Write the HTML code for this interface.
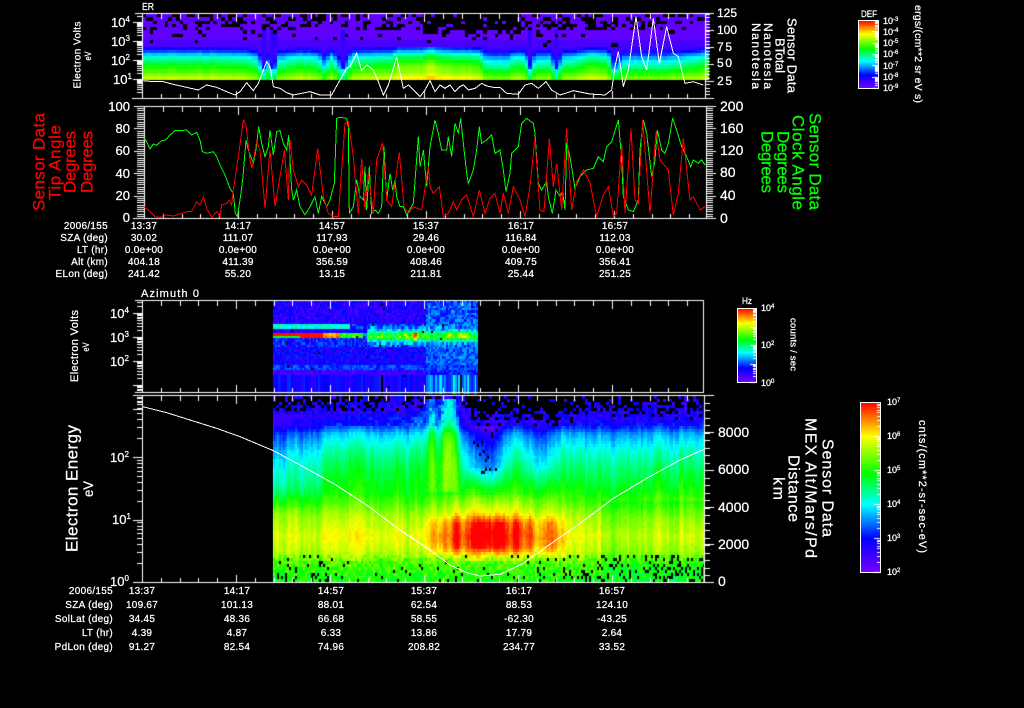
<!DOCTYPE html>
<html><head><meta charset="utf-8"><title>Sensor Data</title>
<style>
html,body{margin:0;padding:0;background:#000;width:1024px;height:708px;overflow:hidden}
#wrap{position:relative;width:1024px;height:708px;background:#000}
#wrap>*{position:absolute;left:0;top:0}
text{font-family:"Liberation Sans",sans-serif;fill:#fff;stroke:#fff;stroke-width:.25px}
.t{font-size:10px;letter-spacing:.25px;text-anchor:middle}
.l{font-size:10px;letter-spacing:.3px;text-anchor:end}
.n{font-size:13px;text-anchor:end}
.m{font-size:13px}
.c{font-size:9px}
.r{text-anchor:middle;dominant-baseline:central}
text.red{fill:#f00;stroke:#f00}
text.grn{fill:#0f0;stroke:#0f0}
</style></head><body>
<div id="wrap">
<div style="left:142px;top:14px;width:563px;height:65px;background:linear-gradient(#400080,#7800ff 45%,#00f 52%,#0ff 68%,#0f0 85%,#ff0)"></div>
<div style="left:273px;top:301px;width:204px;height:91px;background:#1010e0"></div>
<div style="left:273px;top:396px;width:431px;height:186px;background:linear-gradient(#000,#00f 12%,#0ff 24%,#0f0 45%,#ff0 75%,#0f0)"></div>
<canvas id="cv" width="1024" height="708"></canvas>
<svg width="1024" height="708" viewBox="0 0 1024 708" xmlns="http://www.w3.org/2000/svg">
<defs><linearGradient id="rb" x1="0" y1="1" x2="0" y2="0">
<stop offset="0" stop-color="#7800ff"/><stop offset=".2" stop-color="#00f"/><stop offset=".4" stop-color="#0ff"/><stop offset=".58" stop-color="#0f0"/><stop offset=".8" stop-color="#ff0"/><stop offset=".9" stop-color="#ff8000"/><stop offset="1" stop-color="#f00"/></linearGradient></defs>

<!-- data lines -->
<g fill="none" shape-rendering="crispEdges">
<g transform="scale(.33333)" stroke="#fff" stroke-width="3">
<polyline points="430,242 460,245 490,245 520,253 560,262 595,270 620,255 650,262 680,275 705,285 720,275 740,248 760,272 775,250 800,185 810,200 820,260 840,265 860,278 880,285 930,275 960,285 995,285 1020,240 1040,205 1050,200 1070,160 1085,212 1100,195 1120,210 1135,245 1150,285 1165,255 1190,172 1210,265 1225,255 1240,270 1260,290"/></g>
<g transform="translate(420,0) scale(.33333)" stroke="#fff" stroke-width="3">
<polyline points="0,290 15,270 30,242 45,275 60,255 75,265 90,255 105,275 120,260 130,255 145,270 165,265 185,250 200,258 220,262 240,262 260,280 295,283 315,255 335,250 355,265 378,245 395,270 420,285 460,272 510,282 555,285 575,270 585,200 595,155 610,260 625,210 648,50 665,170 680,210 700,55 718,190 740,80 760,160 775,170 795,250 820,245 850,255"/></g>
<g transform="scale(.33333)" stroke="#00ff00" stroke-width="3">
<polyline points="432,415 440,425 450,447 460,432 470,436 485,422 497,420 510,405 525,392 540,392 560,390 575,405 590,397 600,420 607,455 620,460 640,455 650,470 660,495 675,525 690,565 700,580 706,640 712,650 720,600 728,540 738,420 745,450 760,490 768,450 776,380 785,430 795,470 805,440 810,390 820,465 830,395 840,392 850,430 860,450 866,405 875,570 880,600 890,570 900,620 915,645 930,620 945,590 955,640 965,590 980,620 990,600 1003,550 1010,355 1020,352 1040,355 1045,380 1048,640 1060,620 1070,540 1080,590 1090,600 1095,500 1100,630 1108,500 1115,640 1125,630 1135,640 1145,620 1152,440 1160,600 1170,520 1178,570 1185,540 1190,590 1200,620 1210,620 1220,645 1240,610 1255,410 1260,500"/></g>
<g transform="translate(420,0) scale(.33333)" stroke="#00ff00" stroke-width="3">
<polyline points="0,500 10,450 20,560 30,440 45,360 55,400 65,450 80,450 85,410 95,470 105,370 115,400 122,355 130,430 140,520 145,550 160,510 170,450 178,380 185,430 200,420 215,405 225,460 240,450 250,510 258,575 270,520 275,460 295,440 305,370 320,355 340,370 345,400 355,550 365,570 380,545 385,590 397,640 408,570 420,590 428,575 435,630 440,430 450,470 465,565 480,530 500,510 520,505 535,470 550,485 560,440 575,425 595,360 605,480 610,590 625,630 640,635 655,600 660,450 670,360 680,400 695,530 705,480 712,390 725,450 735,460 745,430 758,355 770,390 785,440 800,470 812,500 820,480 835,490 845,480 855,495"/></g>
<g transform="scale(.33333)" stroke="#ff0000" stroke-width="3">
<polyline points="432,620 445,630 465,650 480,652 500,645 520,648 545,640 560,635 575,635 590,605 600,615 610,590 620,625 635,652 650,635 660,650 665,615 680,610 688,600 695,615 700,570 715,470 730,360 738,375 750,480 756,505 770,425 780,450 795,625 810,450 825,620 845,500 853,450 865,600 870,420 880,510 895,560 905,540 920,555 935,585 953,445 970,590 985,640 1000,650 1015,650 1035,370 1045,365 1060,470 1075,640 1085,475 1095,630 1105,520 1120,640 1130,480 1148,428 1160,600 1175,620 1198,458 1212,620 1225,640 1240,620 1265,630"/></g>
<g transform="translate(420,0) scale(.33333)" stroke="#ff0000" stroke-width="3">
<polyline points="5,630 25,500 30,560 40,580 58,560 70,650 85,640 100,605 110,630 125,600 140,585 160,650 178,570 195,640 210,595 225,580 240,640 250,580 265,640 280,560 300,600 315,650 330,560 345,415 360,630 372,635 388,415 400,560 410,490 425,630 440,385 455,630 470,545 490,510 510,550 530,650 550,585 565,560 580,650 590,640 605,430 615,640 633,385 645,600 655,610 668,360 690,640 708,395 720,480 745,510 760,645 775,580 790,415 810,600 820,590 840,630 855,620"/></g>
<g transform="translate(0,390) scale(.33333)" stroke="#fff" stroke-width="3">
<polyline points="428,50 500,68 570,90 650,115 720,140 820,182 900,225 1000,280 1100,345 1200,420 1290,480 1350,525 1400,548 1440,558"/></g>
<g transform="translate(480,390) scale(.33333)" stroke="#fff" stroke-width="3">
<polyline points="0,558 60,553 130,520 200,470 300,400 400,325 500,265 600,210 672,178"/></g>
</g>

<!-- colour bars -->
<rect x="858.5" y="20.5" width="20" height="68" fill="url(#rb)" stroke="#fff"/>
<rect x="737.5" y="308.5" width="19" height="74" fill="url(#rb)" stroke="#fff"/>
<rect x="860.5" y="402.5" width="20" height="170" fill="url(#rb)" stroke="#fff"/>

<!-- panel titles -->
<text x="142" y="10" font-size="10" textLength="12" lengthAdjust="spacingAndGlyphs">ER</text>
<text x="141" y="297" font-size="11" textLength="58">Azimuth 0</text>

<!-- panel 1 axes -->
<text class="m" x="111" y="27">10<tspan dy="-5" font-size="8">4</tspan></text>
<text class="m" x="111" y="46">10<tspan dy="-5" font-size="8">3</tspan></text>
<text class="m" x="111" y="65">10<tspan dy="-5" font-size="8">2</tspan></text>
<text class="m" x="113" y="84">10<tspan dy="-5" font-size="8">1</tspan></text>
<text class="r" transform="translate(78,55) rotate(-90)" font-size="10" textLength="67">Electron Volts</text>
<text class="r" transform="translate(88,56) rotate(-90)" font-size="9" textLength="9" lengthAdjust="spacingAndGlyphs">eV</text>
<text class="m" x="717" y="17" style="font-size:12px" textLength="20">125</text>
<text class="m" x="717" y="34" style="font-size:12px" textLength="20">100</text>
<text class="m" x="717" y="51" style="font-size:12px" textLength="15">75</text>
<text class="m" x="717" y="67" style="font-size:12px" textLength="15">50</text>
<text class="m" x="717" y="85" style="font-size:12px" textLength="15">25</text>
<text class="r" transform="translate(792,55.5) rotate(90)" font-size="13" textLength="75">Sensor Data</text>
<text class="r" transform="translate(780,55.5) rotate(90)" font-size="13" textLength="35">BTotal</text>
<text class="r" transform="translate(768,56) rotate(90)" font-size="12" textLength="66">Nanotesla</text>
<text class="r" transform="translate(756,56) rotate(90)" font-size="12" textLength="66">Nanotesla</text>

<!-- panel 2 axes -->
<text class="n" x="130" y="111">100</text><text class="n" x="130" y="133">80</text><text class="n" x="130" y="155">60</text><text class="n" x="130" y="178">40</text><text class="n" x="130" y="200">20</text><text class="n" x="130" y="222">0</text>
<text class="m" x="720" y="111" style="font-size:14px">200</text><text class="m" x="720" y="133" style="font-size:14px">160</text><text class="m" x="720" y="155" style="font-size:14px">120</text><text class="m" x="720" y="177" style="font-size:14px">80</text><text class="m" x="720" y="200" style="font-size:14px">40</text><text class="m" x="720" y="223" style="font-size:14px">0</text>
<text class="r red" transform="translate(39,162) rotate(-90)" font-size="17" textLength="98">Sensor Data</text>
<text class="r red" transform="translate(55,162.5) rotate(-90)" font-size="17" textLength="75">Tip Angle</text>
<text class="r red" transform="translate(70,162) rotate(-90)" font-size="17" textLength="62">Degrees</text>
<text class="r red" transform="translate(87,162) rotate(-90)" font-size="17" textLength="62">Degrees</text>
<text class="r grn" transform="translate(815,161.5) rotate(90)" font-size="17" textLength="97">Sensor Data</text>
<text class="r grn" transform="translate(798,162.5) rotate(90)" font-size="17" textLength="95">Clock Angle</text>
<text class="r grn" transform="translate(783,162) rotate(90)" font-size="17" textLength="62">Degrees</text>
<text class="r grn" transform="translate(767,162) rotate(90)" font-size="17" textLength="62">Degrees</text>

<!-- table 1 -->
<text class="l" x="108" y="229">2006/155</text><text class="l" x="108" y="241">SZA (deg)</text><text class="l" x="108" y="253">LT (hr)</text><text class="l" x="108" y="265">Alt (km)</text><text class="l" x="108" y="277">ELon (deg)</text>
<text class="t" x="144" y="229">13:37</text><text class="t" x="238" y="229">14:17</text><text class="t" x="332" y="229">14:57</text><text class="t" x="426" y="229">15:37</text><text class="t" x="521" y="229">16:17</text><text class="t" x="615" y="229">16:57</text>
<text class="t" x="144" y="241">30.02</text><text class="t" x="238" y="241">111.07</text><text class="t" x="332" y="241">117.93</text><text class="t" x="426" y="241">29.46</text><text class="t" x="521" y="241">116.84</text><text class="t" x="615" y="241">112.03</text>
<text class="t" x="144" y="253">0.0e+00</text><text class="t" x="238" y="253">0.0e+00</text><text class="t" x="332" y="253">0.0e+00</text><text class="t" x="426" y="253">0.0e+00</text><text class="t" x="521" y="253">0.0e+00</text><text class="t" x="615" y="253">0.0e+00</text>
<text class="t" x="144" y="265">404.18</text><text class="t" x="238" y="265">411.39</text><text class="t" x="332" y="265">356.59</text><text class="t" x="426" y="265">408.46</text><text class="t" x="521" y="265">409.75</text><text class="t" x="615" y="265">356.41</text>
<text class="t" x="144" y="277">241.42</text><text class="t" x="238" y="277">55.20</text><text class="t" x="332" y="277">13.15</text><text class="t" x="426" y="277">211.81</text><text class="t" x="521" y="277">25.44</text><text class="t" x="615" y="277">251.25</text>

<!-- panel 3 axes -->
<text class="m" x="110" y="318">10<tspan dy="-5" font-size="8">4</tspan></text>
<text class="m" x="110" y="342">10<tspan dy="-5" font-size="8">3</tspan></text>
<text class="m" x="110" y="366">10<tspan dy="-5" font-size="8">2</tspan></text>
<text class="r" transform="translate(75,346) rotate(-90)" font-size="11" textLength="72">Electron Volts</text>
<text class="r" transform="translate(86,347) rotate(-90)" font-size="9" textLength="9" lengthAdjust="spacingAndGlyphs">eV</text>

<!-- panel 4 axes -->
<text class="m" x="110" y="462">10<tspan dy="-5" font-size="8">2</tspan></text>
<text class="m" x="112" y="524">10<tspan dy="-5" font-size="8">1</tspan></text>
<text class="m" x="110" y="586">10<tspan dy="-5" font-size="8">0</tspan></text>
<text class="r" transform="translate(72,488.5) rotate(-90)" font-size="17" textLength="127">Electron Energy</text>
<text class="r" transform="translate(88,489) rotate(-90)" font-size="14" textLength="16" lengthAdjust="spacingAndGlyphs">eV</text>
<text class="m" x="718" y="437" style="font-size:14px">8000</text><text class="m" x="718" y="474" style="font-size:14px">6000</text><text class="m" x="718" y="512" style="font-size:14px">4000</text><text class="m" x="718" y="549" style="font-size:14px">2000</text><text class="m" x="718" y="586" style="font-size:14px">0</text>
<text class="r" transform="translate(827,488) rotate(90)" font-size="16" textLength="98">Sensor Data</text>
<text class="r" transform="translate(810,488) rotate(90)" font-size="16" textLength="140">MEX Alt/Mars/Pd</text>
<text class="r" transform="translate(793,488.5) rotate(90)" font-size="16" textLength="67">Distance</text>
<text class="r" transform="translate(778,488.5) rotate(90)" font-size="16" textLength="23">km</text>

<!-- table 2 -->
<text class="l" x="113" y="594">2006/155</text><text class="l" x="113" y="608">SZA (deg)</text><text class="l" x="113" y="622">SolLat (deg)</text><text class="l" x="113" y="636">LT (hr)</text><text class="l" x="113" y="650">PdLon (deg)</text>
<text class="t" x="142" y="594">13:37</text><text class="t" x="237" y="594">14:17</text><text class="t" x="331" y="594">14:57</text><text class="t" x="424" y="594">15:37</text><text class="t" x="519" y="594">16:17</text><text class="t" x="612" y="594">16:57</text>
<text class="t" x="142" y="608">109.67</text><text class="t" x="237" y="608">101.13</text><text class="t" x="331" y="608">88.01</text><text class="t" x="424" y="608">62.54</text><text class="t" x="519" y="608">88.53</text><text class="t" x="612" y="608">124.10</text>
<text class="t" x="142" y="622">34.45</text><text class="t" x="237" y="622">48.36</text><text class="t" x="331" y="622">66.68</text><text class="t" x="424" y="622">58.55</text><text class="t" x="519" y="622">-62.30</text><text class="t" x="612" y="622">-43.25</text>
<text class="t" x="142" y="636">4.39</text><text class="t" x="237" y="636">4.87</text><text class="t" x="331" y="636">6.33</text><text class="t" x="424" y="636">13.86</text><text class="t" x="519" y="636">17.79</text><text class="t" x="612" y="636">2.64</text>
<text class="t" x="142" y="650">91.27</text><text class="t" x="237" y="650">82.54</text><text class="t" x="331" y="650">74.96</text><text class="t" x="424" y="650">208.82</text><text class="t" x="519" y="650">234.77</text><text class="t" x="612" y="650">33.52</text>

<!-- colour bar labels -->
<text class="c" x="861" y="17" textLength="16" lengthAdjust="spacingAndGlyphs">DEF</text>
<text class="c" x="883" y="24">10<tspan dy="-3" font-size="6">-3</tspan></text><text class="c" x="883" y="35">10<tspan dy="-3" font-size="6">-4</tspan></text><text class="c" x="883" y="46">10<tspan dy="-3" font-size="6">-5</tspan></text><text class="c" x="883" y="57">10<tspan dy="-3" font-size="6">-6</tspan></text><text class="c" x="883" y="69">10<tspan dy="-3" font-size="6">-7</tspan></text><text class="c" x="883" y="80">10<tspan dy="-3" font-size="6">-8</tspan></text><text class="c" x="883" y="91">10<tspan dy="-3" font-size="6">-9</tspan></text>
<text class="r" transform="translate(918,54) rotate(90)" font-size="10.5" textLength="98">ergs/(cm**2 sr eV s)</text>

<text class="c" x="742" y="304" textLength="10" lengthAdjust="spacingAndGlyphs">Hz</text>
<text class="c" x="761" y="311">10<tspan dy="-3" font-size="6">4</tspan></text><text class="c" x="761" y="348">10<tspan dy="-3" font-size="6">2</tspan></text><text class="c" x="761" y="386">10<tspan dy="-3" font-size="6">0</tspan></text>
<text class="r" transform="translate(793,344.5) rotate(90)" font-size="9.5" textLength="53">counts / sec</text>

<text class="c" x="887" y="405">10<tspan dy="-3" font-size="6">7</tspan></text><text class="c" x="887" y="439">10<tspan dy="-3" font-size="6">6</tspan></text><text class="c" x="887" y="473">10<tspan dy="-3" font-size="6">5</tspan></text><text class="c" x="887" y="507">10<tspan dy="-3" font-size="6">4</tspan></text><text class="c" x="887" y="541">10<tspan dy="-3" font-size="6">3</tspan></text><text class="c" x="887" y="575">10<tspan dy="-3" font-size="6">2</tspan></text>
<text class="r" transform="translate(922,486.5) rotate(90)" font-size="11" textLength="133">cnts/(cm**2-sr-sec-eV)</text>
</svg>
</div>
<script>
(function(){
var ctx=document.getElementById('cv').getContext('2d');
var seed=12345;
function R(){seed=(seed*1664525+1013904223)%4294967296;return seed/4294967296;}
function I(k,x){if(x<=k[0][0])return k[0][1];for(var i=1;i<k.length;i++){if(x<=k[i][0]){var a=k[i-1],b=k[i];return a[1]+(b[1]-a[1])*(x-a[0])/(b[0]-a[0]);}}return k[k.length-1][1];}
var CM=[[0,[120,0,255]],[.2,[0,0,255]],[.4,[0,255,255]],[.58,[0,255,0]],[.8,[255,255,0]],[.9,[255,128,0]],[1,[255,0,0]]];
function col(c){c=Math.max(0,Math.min(1,c));var r=[0,1,2].map(function(j){return Math.round(I(CM.map(function(e){return [e[0],e[1][j]];}),c));});return 'rgb('+r.join(',')+')';}
function cell(x,y,w,h,c){ctx.fillStyle=c===null?'#000':col(c);ctx.fillRect(Math.round(x),Math.round(y),Math.ceil(w),Math.ceil(h));}
var i,j,x,y,c,s,b;

/* panel 1 */
var B1=[[28,.03],[44,.06],[47,.18],[50,.27],[55,.42],[60,.52],[66,.6],[72,.68],[76,.75],[79,.78]];
var S1=[[142,0],[200,0],[245,-.02],[256,-.08],[262,-.42],[266,-.2],[271,-.48],[276,-.1],[300,-.03],[316,-.05],[322,-.22],[330,-.05],[336,-.2],[340,-.42],[345,-.25],[350,-.03],[390,0],[396,.1],[408,.08],[420,.09],[428,.16],[435,.09],[478,.05],[482,-.1],[505,-.12],[515,-.02],[523,-.05],[528,-.38],[533,-.1],[548,-.1],[555,-.42],[560,-.1],[590,.02],[606,.0],[612,-.35],[622,-.12],[660,-.12],[690,-.06],[705,.02]];
var n1=Math.ceil(563/3.75);
for(i=0;i<n1;i++){x=142+i*3.75;var cn=(R()-.5)*.025;
 for(j=0;j<20;j++){y=14+j*3.25;
  if(y<45){s=I(S1,x);
   var pb=y<28?(x>420&&x<520?.88:(x>520?.42:.38)):(y<40?.1:.02);
   if(x>420&&x<520&&y>=28&&y<32)pb=.4;
   if(x>612&&x<700&&y<28)pb=.35;
   var v=.04+(y>38?.04:0);
   if(s<-.3&&y>30)v=.12;
   cell(x,y,3.75,3.25,R()<pb?null:v);
  }else{s=I(S1,x);var w=y>68?.65:1;cell(x,y,3.75,3.25,Math.max(.1,I(B1,y)+s*w+cn));}
 }}

/* panel 3 */
var colS=[];for(i=0;i<120;i++)colS.push(R());
for(i=0;i<114;i++){x=273+i*1.8;var xr=x>425;
 var hs=.55+.45*Math.sin(x*.55)*Math.sin(x*.17);
 for(j=0;j<40;j++){y=301+j*2.3;
  if(y<324){c=.06+R()*.16+(xr?.1+R()*.05:0);}
  else if(y<328){c=x<350?.36+R()*.14:.14+R()*.18;if(xr)c=.24+R()*.12;}
  else if(y<331){c=.1+R()*.14;}
  else if(y<337){c=x<322?.99:(x<338?.82+R()*.16:(x<362?.5+R()*.2:.2+R()*.2));if(x<300&&y>335)c=.55;}
  else if(y<347){c=.12+R()*.18;}
  else if(y<365){c=.1+R()*.14+(xr?.1:0);}
  else if(y<369){c=.2+R()*.1;}
  else if(y<374){c=.04+R()*.12+(xr?.12:0);}
  else{c=.12+colS[i]*.12+(x>425?.1+colS[i]*.1:0);if(colS[i]>.985)c=null;}
  if(x>365&&y>=325&&y<347){var e=.24+.28*Math.exp(-Math.pow((y-335)/7,2));c=e+(R()-.5)*.2;
   var h=I([[365,0],[372,.15],[380,.1],[395,.05],[402,.25],[410,.2],[415,.32],[422,.15],[430,0],[445,.15],[458,.28],[470,.15],[477,0]],x);c+=h*hs*Math.exp(-Math.pow((y-335)/4,2))*1.6;}
  if(c!==null&&R()<.004)c=null;
  cell(x,y,2,2.4,c);
 }}

/* panel 4 */
var B4=[[396,.12],[412,.16],[423,.22],[433,.36],[450,.46],[467,.53],[490,.58],[502,.64],[515,.72],[535,.78],[550,.74],[562,.64],[582,.58]];
var A=[[410,0],[428,.06],[440,.12],[450,.13],[456,.24],[462,.14],[470,.18],[476,.27],[500,.26],[505,.19],[510,.13],[516,.24],[522,.12],[528,.2],[535,.09],[545,.12],[552,.14],[560,.05],[570,0]];
var AY=[[492,.1],[500,.35],[512,.45],[522,1],[545,1],[553,.45],[562,0]];
var DP=[[455,0],[465,.12],[472,.22],[495,.22],[505,.1],[520,.05],[530,.1],[545,.14],[560,.04],[590,.03]];
var BU=[[400,0],[426,.05],[430,.14],[436,.05],[448,.2],[458,.03],[466,0]];
var ED=[[273,412],[340,412],[420,408],[428,398],[458,398],[472,425],[560,425],[590,418],[704,418]];
var nc=Math.ceil(431/2);
var cols=[],coarse=0;for(i=0;i<nc;i++){coarse=coarse*.85+(R()-.5)*.05;cols.push(coarse+(R()-.5)*.05);}
function base4(x,y){var b=I(B4,y);
  if(x<340&&y>410&&y<510){b-=.12*(1-(x-273)/67)*Math.min(1,(510-y)/30);}
  if(y<490){b+=I(BU,x)*(.5+Math.min(1,(490-y)/50));}
  if(y<490){b-=I(DP,x)*Math.min(1,(490-y)/25);}
  if(x>600&&y>500){b-=.04;}
  return b;}
for(i=0;i<nc;i++){x=273+i*2;
 for(j=0;j<62;j++){y=396+j*3;if(y<426)continue;
  b=base4(x,y);
  c=b+cols[i]*(y<560?1:.3)+(R()-.5)*.035;
  c+=I(A,x)*I(AY,y);
  var blk=false;
  if(x>472&&x<497&&y<472&&R()<.13)blk=true;
  if(y>=555){var p=x<345?.1:(x<560?.03:.14);if(y>=565)p*=1.6;
    c+=(R()-.5)*.12;if(R()<p)blk=true;}
  cell(x,y,2,3,blk?null:c);
 }}
/* speckled top of panel 4 in 3px blocks */
for(x=273;x<702;x+=3){var ed=I(ED,x);
 for(y=396;y<426;y+=3){
  var pB=Math.max(0,Math.min(1,(ed-y)/20))*.85;
  if(R()<pB){cell(x,y,3,3,null);continue;}
  c=y<ed?.08+R()*.14:base4(x,y)+(R()-.5)*.12;
  cell(x,y,3,3,Math.max(.1,c));
 }}

/* axes */
ctx.fillStyle='#fff';
function H(x0,x1,y){ctx.fillRect(x0,y,x1-x0,1);}
function V(x,y0,y1){ctx.fillRect(x,y0,1,y1-y0);}
function xTicks(x0,x1,top,bot){
 for(var k=0;(x0+k*18.8)<x1;k++){var tx=Math.round(x0+k*18.8),big=(k%5===0)?8:5;
  V(tx,top,top+big);V(tx,bot-big+1,bot);}
}
function logT(ax,ybot,d,ytop,dir,maj,min){
 for(var de=0;de<6;de++){for(var m=1;m<10;m++){
  var yy=Math.round(ybot-d*(de+Math.log(m)/Math.LN10));
  if(yy<ytop||yy>ybot)continue;
  var L=m===1?maj:min;
  if(dir<0)ctx.fillRect(ax-L,yy,L,1);else ctx.fillRect(ax+1,yy,L,1);
 }}
}
var yy;
/* panel 1 frame */
H(135,714,13);H(132,714,98);V(142,13,99);V(705,13,99);
xTicks(142,705,14,98);
logT(142,98,19,14,-1,9,5);
for(y=14;y<=98;y+=3.35){yy=Math.round(y);ctx.fillRect(705,yy,5,1);}
[13,30,47,64,81,98].forEach(function(q){ctx.fillRect(705,q,9,1);});
/* panel 2 frame */
H(135,716,106);H(133,716,218);V(144,106,219);V(706,106,219);
xTicks(144,706,107,218);
for(y=106;y<=218;y+=2.24){yy=Math.round(y);ctx.fillRect(137,yy,7,1);ctx.fillRect(707,yy,6,1);}
[106,128,151,173,196,218].forEach(function(q){ctx.fillRect(134,q,10,1);ctx.fillRect(707,q,9,1);});
/* panel 3 frame */
H(135,704,300);H(135,704,392);V(142,300,393);V(703,300,393);
xTicks(142,703,301,392);
logT(142,409,24,300,-1,9,5);
/* panel 4 frame */
H(135,704,395);H(133,704,582);V(142,395,583);V(704,395,583);
xTicks(142,704,396,582);
logT(142,582,62.5,395,-1,9,5);
for(y=395;y<=582;y+=7.5){yy=Math.round(y);ctx.fillRect(704,yy,6,1);}
[395,432,470,507,544,582].forEach(function(q){ctx.fillRect(704,q,10,1);});
/* colour bar ticks */
function barT(ar,ybot,d,ytop){
 for(var de=0;de<7;de++){for(var m=1;m<10;m++){
  var yy=Math.round(ybot-d*(de+Math.log(m)/Math.LN10));
  if(yy<ytop||yy>ybot)continue;
  var L=m===1?6:3;ctx.fillRect(ar-L,yy,L,1);
 }}
}
var ov=document.createElement('canvas');ov.width=1024;ov.height=708;
document.getElementById('wrap').appendChild(ov);
var main=ctx;ctx=ov.getContext('2d');ctx.fillStyle='#fff';
barT(878,88,11.33,21);barT(756,382,18.5,309);barT(880,572,34,403);
ctx=main;
})();
</script>
</body></html>
